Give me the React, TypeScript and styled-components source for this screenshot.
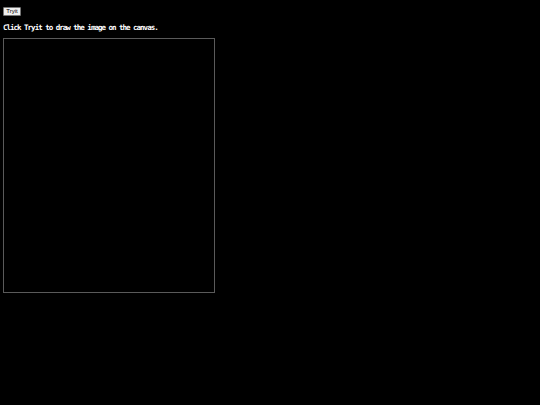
import React from "react";
import styled, { createGlobalStyle } from "styled-components";

const Global = createGlobalStyle`
  html, body { margin: 0; padding: 0; background: #000; }
  body { font-family: "DejaVu Sans Mono", monospace; }
`;

const Page = styled.div`
  display: flex;
  flex-direction: column;
  align-items: flex-start;
  padding: 7px 0 0 3px;
`;

const Button = styled.button`
  height: 9px;
  width: 18px;
  padding: 0;
  margin: 0;
  border: 1px solid #767676;
  border-radius: 1px;
  background: #efefef;
  color: #000;
  font-family: "Liberation Sans", Arial, sans-serif;
  font-size: 6px;
  line-height: 7px;
  display: flex;
  align-items: center;
  justify-content: center;
`;

const Text = styled.p`
  margin: 7px 0 0 0;
  color: #fff;
  font-family: "DejaVu Sans Mono", monospace;
  font-weight: bold;
  font-size: 7.5px;
  line-height: 9px;
  letter-spacing: -1px;
`;

const Canvas = styled.div`
  margin-top: 6px;
  width: 210px;
  height: 253px;
  border: 1px solid #5a5a5a;
`;

export default function App() {
  return (
    <>
      <Global />
      <Page>
        <Button>Tryit</Button>
        <Text>Click Tryit to draw the image on the canvas.</Text>
        <Canvas />
      </Page>
    </>
  );
}
